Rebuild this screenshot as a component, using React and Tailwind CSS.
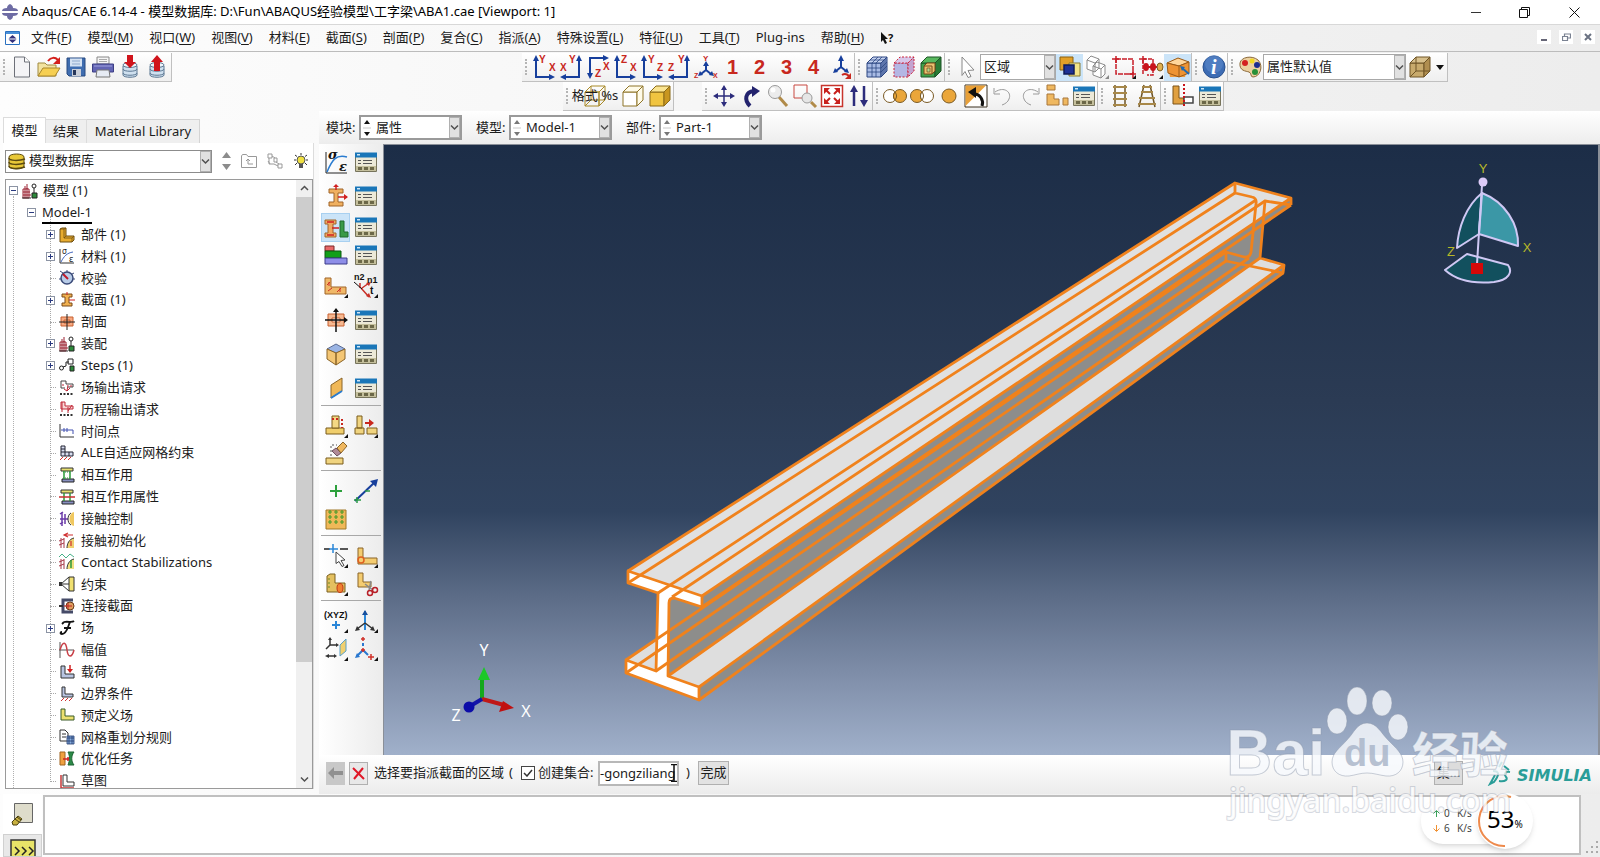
import React, { useState } from "react";

const Ico = ({ children, w = 24, h = 24, box = "0 0 24 24" }) => (
  <svg width={w} height={h} viewBox={box} fill="none" className="shrink-0 overflow-visible" aria-hidden="true">
    {children}
  </svg>
);

const T = ({ x, y, s = 10, c = "#c8281e", children }) => (
  <text x={x} y={y} fontSize={s} fill={c} fontWeight="700" fontFamily="Liberation Sans, sans-serif">{children}</text>
);

/* ---------- file toolbar ---------- */

const NewIcon = () => (
  <Ico><path d="M4.500 2h10l5 5v15h-15z" fill="#f4f4f6" stroke="#6d7078" /><path d="M14.500 2v5h5" fill="#fff" stroke="#6d7078" /></Ico>
);
const OpenIcon = () => (
  <Ico>
    <path d="M1 21V8h7l2 2h9v11z" fill="#f3e3a0" stroke="#a08a40" />
    <path d="M1 21l5-8h17l-5 8z" fill="#f6cf52" stroke="#a8862c" />
    <path d="M11 6c3-4 7-4 10-1" stroke="#d4201c" strokeWidth="2" /><path d="M23 2v7h-7z" fill="#d4201c" />
  </Ico>
);
const SaveIcon = () => (
  <Ico>
    <path d="M3 3h18v18H5l-2-2z" fill="#3f6db0" stroke="#284a80" />
    <path d="M6 3.500h12v8H6z" fill="#d5e2f2" /><path d="M8 6h8M8 9h8" stroke="#8fa9cc" />
    <path d="M8 14h9v7H8z" fill="#c9ced8" /><path d="M9 15h3v5H9z" fill="#27365a" />
  </Ico>
);
const PrintIcon = () => (
  <Ico>
    <path d="M6 9V2h12v7z" fill="#f5f5f5" stroke="#888" /><path d="M8 4.500h8M8 6.500h8" stroke="#aaa" />
    <path d="M1.500 9h21v8h-21z" fill="#6264b4" stroke="#3d3f84" /><path d="M3 11h18" stroke="#9fa1de" />
    <path d="M6 15h12l1 7H5z" fill="#e6ebf4" stroke="#777" />
  </Ico>
);
const DbIcon = ({ up }) => (
  <Ico>
    <path d="M5 11v9c0 3 14 3 14 0v-9z" fill="#cfe0ef" stroke="#5d7893" />
    <path d="M5 14c0 3 14 3 14 0M5 18c0 3 14 3 14 0" stroke="#5d7893" />
    <ellipse cx="12" cy="10" rx="7" ry="2.500" fill="#eef5fb" stroke="#5d7893" />
    {up ? <path d="M12 0l6 7h-3v9H9V7H6z" fill="#d0141c" /> : <path d="M12 13l6-6h-3V0H9v7H6z" fill="#d0141c" />}
  </Ico>
);

/* ---------- view toolbar ---------- */

const Blue = ({ d }) => <path d={d} stroke="#173f9c" strokeWidth="2" />;
const Tip = ({ d }) => <path d={d} fill="#173f9c" />;

const AxisXY = () => <Ico><Blue d="M4 4v18h15" /><Tip d="M4 0l3 6H1zM23 22l-6-3v6z" /><T x="7" y="8">Y</T><T x="17" y="16">X</T></Ico>;
const AxisYX = () => <Ico><Blue d="M20 4v18H5" /><Tip d="M20 0l3 6h-6zM1 22l6-3v6z" /><T x="10" y="8">Y</T><T x="1" y="16">X</T></Ico>;
const AxisXZ = () => <Ico><Blue d="M18 3H4v17" /><Tip d="M23 3l-6-3v6zM4 24l3-6H1z" /><T x="17" y="15">X</T><T x="9" y="22">Z</T></Ico>;
const AxisZX = () => <Ico><Blue d="M4 4v18h15" /><Tip d="M4 0l3 6H1zM23 22l-6-3v6z" /><T x="8" y="8">Z</T><T x="17" y="16">X</T></Ico>;
const AxisYZ = () => <Ico><Blue d="M4 4v18h15" /><Tip d="M4 0l3 6H1zM23 22l-6-3v6z" /><T x="8" y="8">Y</T><T x="17" y="16">Z</T></Ico>;
const AxisZY = () => <Ico><Blue d="M20 4v18H5" /><Tip d="M20 0l3 6h-6zM1 22l6-3v6z" /><T x="11" y="8">Y</T><T x="1" y="16">Z</T></Ico>;
const AxisIso = () => (
  <Ico><Blue d="M12 15V9M12 15l-5 4M12 15l5 4" /><Tip d="M12 6l3 5H9zM4 21l2-5 3 4zM20 21l-2-5-3 4z" /><T x="9" y="6" s="8">Y</T><T x="0" y="23" s="7">Z</T><T x="19" y="23" s="7">X</T></Ico>
);
const ViewNum = ({ n }) => <span className="text-[20px] leading-6 font-bold text-[#c8281e] font-['Liberation_Sans',sans-serif]">{n}</span>;
const AxisRot = () => (
  <Ico><Blue d="M12 12V5M12 12l-5 4M12 12l5 4" /><Tip d="M12 0l3 6H9zM4 18l2-5 3 4zM20 18l-2-5-3 4z" /><path d="M13 20c3-2 5-1 7 1" stroke="#c8281e" strokeWidth="2" /><path d="M22 18v6h-6z" fill="#c8281e" /></Ico>
);
const Cube = ({ fill, side, top, line, children, dash }) => (
  <Ico>
    <path d="M2 8h14v14H2z" fill={fill} stroke={line} strokeDasharray={dash} />
    <path d="M2 8l6-6h14l-6 6z" fill={top} stroke={line} strokeDasharray={dash} />
    <path d="M16 8l6-6v14l-6 6z" fill={side} stroke={line} strokeDasharray={dash} />
    {children}
  </Ico>
);
const MeshCube = () => (
  <Cube fill="#a9bbe4" side="#7f94c8" top="#c6d3f0" line="#2c4682"><path d="M7 8v14M11 8v14M2 13h14M2 17h14M7 8l6-6M11 8l6-6M5 5h14M18 6v14M20 4v14M16 13l6-6M16 17l6-6" stroke="#2c4682" strokeWidth=".8" /></Cube>
);
const DotCube = () => <Cube fill="#b4b6e4" side="#c4a4d0" top="#d8c8ea" line="#cc2038" dash="2 1.500" />;
const GreenCube = () => (
  <Cube fill="#3fa14a" side="#2a7c36" top="#58b85e" line="#1c5426"><path d="M5 11h8v8H5zM5 11l3-3h8v8l-3 3" fill="#e8c070" stroke="#7a4a18" /><path d="M8 13h3v4H8z" fill="#b4d88c" stroke="#7a4a18" strokeWidth=".7" /></Cube>
);
const Corner = () => <path d="M24 20v4h-4z" fill="#111" />;
const CursorIcon = () => <Ico><path d="M7 2l12 13-6 .5 3 6-3 1-3-6-3 4z" fill="#fff" stroke="#888" /></Ico>;
const LayersIcon = () => <Ico><path d="M2 2h13v13H2z" fill="#e2a028" stroke="#8a6010" /><path d="M11 8h11v13H11z" fill="#f2e48a" stroke="#8a7a30" /><path d="M6 10h10v9H6z" fill="#1e3296" stroke="#101c58" strokeWidth="1.500" /></Ico>;
const GhostCubes = () => <Ico><path d="M2 5l4-4 8 3v9l-4 4-8-3zM2 5l8 3v9M10 8l4-4M8 11l4-4 8 3v9l-4 4-8-3zM8 11l8 3v9M16 14l4-4" fill="#fff" stroke="#8b8b8b" /><path d="M24 20v4h-4z" fill="#888" /></Ico>;
const RectSel = () => <Ico><path d="M4 4h17v15H4z" stroke="#c81e28" strokeWidth="1.500" strokeDasharray="5 1" /><path d="M0 4h7M4 1v7M17 19h7M21 16v7" stroke="#c81e28" strokeWidth="1.500" /><Corner /></Ico>;
const CircSel = () => <Ico><path d="M4 19V4h10v16H8" stroke="#c81e28" strokeWidth="1.500" strokeDasharray="4 1" /><path d="M0 4h7M4 1v7" stroke="#c81e28" strokeWidth="1.500" /><ellipse cx="7" cy="12" rx="3" ry="4" fill="#c8141c" /><path d="M9 12h9" stroke="#c8141c" strokeWidth="2" /><ellipse cx="14" cy="12" rx="3" ry="4" fill="#c8141c" /><ellipse cx="21" cy="12" rx="3" ry="4" fill="#e0b050" stroke="#7a5a20" /><Corner /></Ico>;
const OrangeBox = () => <Ico><path d="M1 8l11-5 11 5-4 14H4z" fill="#f09a3c" /><path d="M1 8l11-5 11 4-10 4z" fill="#ffd69a" stroke="#9a5a18" /><path d="M1 8l12 3v11L2 18zM13 11l10-4v11l-10 4" fill="#ee9434" stroke="#9a5a18" /><path d="M16 13l7 6" stroke="#1e6ab4" strokeWidth="2" /><path d="M14 11l5 1-3 4z" fill="#1e6ab4" /></Ico>;
const InfoIcon = () => <Ico><circle cx="12" cy="12" r="11" fill="#3d6cb4" stroke="#28508e" /><circle cx="12" cy="9" r="9" fill="#5c88ca" opacity=".6" /><text x="9" y="19" fontSize="20" fontStyle="italic" fontWeight="700" fill="#fff" fontFamily="Liberation Serif, serif">i</text></Ico>;
const PaletteIcon = () => <Ico><path d="M2 8C3 2 14 0 20 5c6 6 2 17-5 17-3 0-1-4-4-5S1 16 2 8z" fill="#ecd0a0" stroke="#8a6838" /><circle cx="7" cy="8" r="3" fill="#d42020" /><circle cx="14" cy="6" r="2.500" fill="#f2d820" /><circle cx="19" cy="10" r="3" fill="#1c2c90" /><circle cx="17" cy="17" r="3" fill="#289038" /></Ico>;
const TanCube = () => <Cube fill="#c8aa6c" side="#b08e50" top="#d8c08c" line="#6e5426"><path d="M8 2v14h14M8 16l-6 6" stroke="#6e5426" /></Cube>;

/* ---------- second toolbar row ---------- */

const WireCube = () => <Cube fill="none" side="none" top="none" line="#a88a28"><path d="M8 2v14h14M8 16l-6 6" stroke="#a88a28" /></Cube>;
const HiddenCube = () => <Cube fill="#fff" side="#fffbe8" top="#fffbe8" line="#8e7428" />;
const ShadedCube = () => <Cube fill="#f0c440" side="#c89620" top="#fae490" line="#8a6a18" />;
const PanIcon = () => <Ico><path d="M12 3v18M3 12h18" stroke="#2c2c7c" strokeWidth="1.500" /><path d="M12 1l3 5H9zM12 23l3-5H9zM1 12l5-3v6zM23 12l-5-3v6z" fill="#2c2c7c" /></Ico>;
const RotateIcon = () => <Ico><path d="M11 22C5 16 6 8 15 7" stroke="#23236e" strokeWidth="4" /><path d="M21 7l-8-5v11z" fill="#23236e" /></Ico>;
const ZoomIcon = () => <Ico><path d="M13 13l8 9" stroke="#b08a48" strokeWidth="3" /><circle cx="9" cy="8" r="6.500" fill="#ececec" stroke="#9a9a9a" /><circle cx="7" cy="6" r="2.500" fill="#fff" /></Ico>;
const BoxZoomIcon = () => <Ico><path d="M1 1h13v13H1z" stroke="#c84840" /><path d="M18 18l5 5" stroke="#b08a48" strokeWidth="3" /><circle cx="14" cy="14" r="5" fill="#e6e6e6" stroke="#9a9a9a" /></Ico>;
const FitIcon = () => <Ico><path d="M1.500 1.500h21v21h-21z" fill="#fff" stroke="#c8342c" strokeWidth="1.500" /><path d="M6 6l4 4M18 6l-4 4M6 18l4-4M18 18l-4-4" stroke="#c8201c" strokeWidth="2" /><path d="M4 4h6l-6 6zM20 4h-6l6 6zM4 20h6l-6-6zM20 20h-6l6-6z" fill="#c8201c" /></Ico>;
const CycleIcon = () => <Ico><path d="M7 22V5M17 2v17" stroke="#2c2c7c" strokeWidth="2.500" /><path d="M7 1l4 7H3zM17 23l4-7h-8z" fill="#2c2c7c" /></Ico>;
const VennIcon = ({ left }) => (
  <Ico>
    <circle cx="7" cy="12" r="6.500" fill={left ? "#eaa63a" : "#fff"} stroke="#7a5a24" />
    <circle cx="17" cy="12" r="6.500" fill={left ? "#fff" : "#eaa63a"} stroke="#7a5a24" />
    <path d="M12 8a6.500 6.500 0 0 1 0 8 6.500 6.500 0 0 1 0-8z" fill={left ? "#fff" : "#eaa63a"} stroke="#7a5a24" />
  </Ico>
);
const DiscIcon = () => <Ico><circle cx="12" cy="12" r="7" fill="#eaa63a" stroke="#7a5a24" /></Ico>;
const ReplaceIcon = () => <Ico><path d="M1 1h22v22H1z" fill="#fff" stroke="#3a3020" /><path d="M1.500 1.500H22L1.500 22z" fill="#e8a038" /><path d="M18 22c2-6-2-12-8-12" stroke="#111" strokeWidth="3" /><path d="M4 8l8-5v11z" fill="#111" /></Ico>;
const UndoIcon = ({ flip }) => (
  <Ico><g transform={flip ? "translate(24 0) scale(-1 1)" : undefined}><path d="M4 8c9-6 17 0 14 7-1 3-4 5-7 6" stroke="#9a9a9a" /><path d="M3 4v6h6" stroke="#9a9a9a" /></g></Ico>
);
const PartsIcon = () => <Ico><path d="M2 1h8v5H2zM2 10h7v5h5v6H2zM18 14h5v7h-5z" fill="#efb860" stroke="#a8763a" /></Ico>;
const LadderIcon = ({ taper }) => (
  <Ico>
    <path d={taper ? "M9 1L4 23M15 1l5 22" : "M7 1v22M17 1v22"} stroke="#6e5426" strokeWidth="1.500" />
    <path d={taper ? "M7 3h10M6 8h12M4 14h16M3 20h18" : "M5 3h14M5 9h14M5 15h14M5 21h14"} stroke="#a88848" strokeWidth="2" />
  </Ico>
);
const CutIcon = () => <Ico><path d="M2 2h6v12h5v6H2z" fill="#e0a040" stroke="#7a5218" /><path d="M13 13h9v6h-9z" fill="#fff" stroke="#444" strokeWidth="1.500" /><path d="M13 0v24" stroke="#c8141c" strokeWidth="2" strokeDasharray="2 2" /></Ico>;

const ManagerIcon = () => (
  <Ico>
    <path d="M1.500 3.500h21v18h-21z" fill="#ece9d8" stroke="#77745c" />
    <path d="M1 2.500h22v5H1z" fill="#1a76b8" /><path d="M3 4h3v1.500H3z" fill="#cfe6f6" />
    <path d="M4 10.500h3M9 10.500h9M4 13.500h3M9 13.500h9" stroke="#555" />
    <path d="M2 16h20v5H2z" fill="#c4bf9c" /><path d="M4 17h4v3H4zM10 17h4v3h-4zM16 17h4v3h-4z" fill="#6c6848" />
  </Ico>
);

/* ---------- property module toolbox ---------- */

const MaterialIcon = () => <Ico><path d="M2 2v21h21" stroke="#222" /><path d="M3 22C8 10 12 4 23 7" stroke="#2a7cd0" strokeWidth="1.500" /><text x="4" y="9" fontSize="13" fontStyle="italic" fontWeight="700" fill="#111" fontFamily="DejaVu Serif, serif">σ</text><text x="15" y="21" fontSize="13" fontStyle="italic" fontWeight="700" fill="#111" fontFamily="DejaVu Serif, serif">ε</text></Ico>;
const SectionIcon = () => <Ico><path d="M5 5h14v4h-5v9h5v4H5v-4h5V9H5z" fill="#f0b060" stroke="#a06428" /><path d="M12 6V1M14 13h9" stroke="#d02020" strokeWidth="1.500" /><path d="M9 3l3-3 3 3zM20 10l4 3-4 3z" fill="#d02020" /></Ico>;
const AssignIcon = () => <Ico><path d="M1 5h11v4H9v9h3v4H1v-4h3V9H1z" fill="#f0a860" stroke="#a06428" /><path d="M8 13h7M3 7h7M3 20h7" stroke="#d02020" strokeWidth="1.500" /><path d="M16 6h4v11h4v5h-8z" fill="#3a9a48" stroke="#1e6a2c" /></Ico>;
const LayupIcon = () => <Ico><path d="M1 3h9v5H1z" fill="#e86868" stroke="#7a2828" /><path d="M1 8h16v7H1z" fill="#12a018" stroke="#0a5a10" /><path d="M1 15h22v6H1z" fill="#8e8ee8" stroke="#3c3c8a" /></Ico>;
const OrientIcon = () => <Ico><path d="M1 4h6v9h15v7H1z" fill="#f0b868" stroke="#a06428" /><path d="M3 11l3-3M4 17l4-3M13 18l4-4M5 8v4M16 14v4" stroke="#d03028" /><Corner /></Ico>;
const BeamOrientIcon = () => <Ico><path d="M8 14l7-5M7 14l8 9M6 14V9" stroke="#c83028" strokeWidth="1.500" /><path d="M17 8l-5 1 3 3zM17 24l-5-2 3-3z" fill="#c83028" /><path d="M0 8l8 7" stroke="#111" /><T x="0" y="6" s="9" c="#111">n2</T><T x="13" y="9" s="9" c="#111">n1</T><T x="16" y="20" s="10" c="#111">t</T><Corner /></Ico>;
const ProfileIcon = () => <Ico><path d="M4 6h16v12H4zM8 10h8v4H8z" fill="#f6b890" fillRule="evenodd" stroke="#c86030" /><path d="M12 1v23M1 12h21" stroke="#111" strokeWidth="1.500" /><path d="M12 0l3 4H9zM24 12l-4-3v6z" fill="#111" /></Ico>;
const SkinIcon = () => <Ico><path d="M3 7l9-5 9 5-9 4z" fill="#9ab4e4" stroke="#5a6a90" /><path d="M3 7v10l9 6V11zM21 7v10l-9 6V11z" fill="#f4c674" stroke="#8a6428" /></Ico>;
const ShellIcon = () => <Ico><path d="M7 9l11-7v13L7 22z" fill="#f0b858" stroke="#8a6428" /><path d="M7 22l11-7" stroke="#2a7cd0" strokeWidth="2" /></Ico>;
const ExtrudeIcon = () => <Ico><path d="M2 14h18v6H2z" fill="#f0ce6c" stroke="#7a5c1c" /><path d="M8 2h7v12H8z" fill="#f4d884" stroke="#7a5c1c" /><path d="M8 5h7M18 5v9" stroke="#c8281e" strokeWidth="2" strokeDasharray="2 2" /><Corner /></Ico>;
const SplitIcon = () => <Ico><path d="M3 2h5v12H3zM1 14h9v6H1zM13 14h10v6H13z" fill="#f0d480" stroke="#7a5c1c" /><path d="M11 9h6" stroke="#c8281e" strokeWidth="2" /><path d="M15 5l5 4-5 4z" fill="#c8281e" /><Corner /></Ico>;
const EraseIcon = () => <Ico><path d="M2 16h17v6H2z" fill="#f0d480" stroke="#7a5c1c" /><path d="M7 14V3h6" stroke="#555" strokeDasharray="2 2" /><path d="M8 9l4-3 5 5-4 3z" fill="#b08a98" stroke="#6a5060" /><path d="M13 6l6-6 4 4-6 7z" fill="#f0b860" stroke="#8a6428" /></Ico>;
const PointIcon = () => <Ico><path d="M12 6v12M6 12h12" stroke="#2ca03c" strokeWidth="2" /></Ico>;
const DatumAxisIcon = () => <Ico><path d="M1 22L21 3" stroke="#173f9c" strokeWidth="2" /><path d="M24 0l-2 8-6-6z" fill="#173f9c" /><path d="M0 21h7M3 18v6M11 12h5" stroke="#2c9a48" strokeWidth="1.500" /></Ico>;
const PointGridIcon = () => <Ico><path d="M2 3h20v19H2z" fill="#f0b858" stroke="#a07828" /><path d="M4 5h4M10 5h4M16 5h4M4 10h4M10 10h4M16 10h4M4 15h4M10 15h4M16 15h4M6 3v4M12 3v4M18 3v4M6 8v4M12 8v4M18 8v4M6 13v4M12 13v4M18 13v4" stroke="#4c9c2c" strokeWidth="1.200" /></Ico>;
const PickIcon = () => <Ico><path d="M0 5h6M16 5h8" stroke="#222" strokeWidth="1.500" /><path d="M9 0v9M5 5h9" stroke="#2a86d8" strokeWidth="1.500" /><path d="M12 8l9 8-4 .5 3 5-2 1-3-5-3 2z" fill="#fff" stroke="#444" /><Corner /></Ico>;
const PartEditIcon = () => <Ico><path d="M4 4h5v10h14v6H4z" fill="#f4cc70" stroke="#8a6428" /><circle cx="7" cy="16" r="3" stroke="#e06020" strokeWidth="1.500" /><Corner /></Ico>;
const PartCellIcon = () => <Ico><path d="M3 4l3-2h5v9h10v9H3z" fill="#e4c060" stroke="#7a6020" /><ellipse cx="16" cy="16" rx="3" ry="4.500" fill="#f08030" stroke="#c03818" /><path d="M5 6v12" stroke="#6a8a28" strokeDasharray="2 2" /><Corner /></Ico>;
const PartCutIcon = () => <Ico><path d="M4 1h5v9h8v5H4z" fill="#f4cc70" stroke="#8a6428" /><path d="M11 12l8 6M17 9l-2 9" stroke="#888" strokeWidth="1.500" /><circle cx="16" cy="21" r="2.500" stroke="#b82028" strokeWidth="1.500" /><circle cx="21" cy="18" r="2.500" stroke="#b82028" strokeWidth="1.500" /></Ico>;
const XyzIcon = () => <Ico><T x="0" y="9" s="9" c="#111">(XYZ)</T><path d="M12 12v8M8 16h8" stroke="#2a86d8" strokeWidth="2" /><Corner /></Ico>;
const CsysIcon = () => <Ico><path d="M11 21V2" stroke="#2a86d8" strokeWidth="2" /><path d="M11 1l3 5H8z" fill="#174f9c" /><path d="M11 14l-8 6M11 14l8 6" stroke="#333" strokeWidth="1.500" /><path d="M1 22l2-5 3 4zM21 22l-2-5-3 4z" fill="#333" /><Corner /></Ico>;
const PlaneIcon = () => <Ico><path d="M6 8V2M6 8h6M6 8l-4 4M3 19h8" stroke="#333" strokeWidth="1.500" /><path d="M4 3l2-3 2 3zM12 6l3 2-3 2zM1 19l4-2v4zM13 19l-3-2v4z" fill="#333" /><path d="M16 8l6-6v12l-6 5z" fill="#f0d070" stroke="#5aa0c8" /><Corner /></Ico>;
const CsysPtIcon = () => <Ico><path d="M9 13l-6 6M9 13l5 5M9 6v3" stroke="#2a78d0" strokeWidth="2" /><path d="M9 0v4M7 2h4M9 11v4M7 13h4M17 17v6M14 20h6" stroke="#d03028" strokeWidth="1.500" /><path d="M1 21l2-5 3 4z" fill="#2a78d0" /><Corner /></Ico>;

/* ---------- model tree ---------- */

const Small = ({ children }) => <Ico w={16} h={16} box="0 0 16 16">{children}</Ico>;

const treeIcons = {
  model: <Small><path d="M5 1v5M1 6h6v9H1zM1 9h7M1 12h8M3 3v12M5 5v10" stroke="#9a2030" /><path d="M0 15h9" stroke="#333" /><circle cx="12" cy="3" r="2" stroke="#222" /><path d="M12 5v5M10 10h5v5h-5z" fill="#2c8a3a" stroke="#222" /></Small>,
  part: <Small><path d="M1 2l2-1h4v8h8v4l-2 2H1z" fill="#e8ac30" stroke="#6e4e10" /><path d="M1 2h4v9h8v4M5 2l2-1M5 11l2-2M13 11l2-2" stroke="#6e4e10" strokeWidth=".8" /></Small>,
  material: <Small><path d="M1 1v14h14" stroke="#333" /><path d="M2 14C5 8 8 5 14 4" stroke="#4468c0" /><text x="3" y="6" fontSize="8" fill="#222">σ</text><text x="10" y="14" fontSize="9" fill="#222">ε</text></Small>,
  calib: <Small><circle cx="8" cy="8" r="6" fill="#b8cce8" stroke="#3a4a78" strokeWidth="1.500" /><path d="M4 4l5 5" stroke="#c01828" strokeWidth="2" /><path d="M1 1l3 2M15 3l-2 1M8 0v2M0 9h2M14 9h2" stroke="#3a4a78" /></Small>,
  section: <Small><path d="M3 2h10v3h-3v6h3v3H3v-3h3V5H3z" fill="#f0b050" stroke="#7a4a18" /><path d="M8 0v3M10 8h6" stroke="#d02020" /></Small>,
  profile: <Small><path d="M2 3h12v9H2z" fill="#f6a880" stroke="#c86030" /><path d="M5 6h6v3H5z" stroke="#c86030" /><path d="M8 0v16M0 8h16" stroke="#222" /></Small>,
  steps: <Small><circle cx="2.500" cy="10" r="2" stroke="#222" /><path d="M4 9l3-1V4h3M9 1h5v5H9z" stroke="#222" /><path d="M11 8h4v5h-4z" fill="#2c8a3a" stroke="#222" /></Small>,
  field: <Small><path d="M2 1h5v3h7v3H9M2 1v7h4" stroke="#444" /><path d="M4 4v2M9 5l-1 6M5 9l3 2 3-3M12 5v2" stroke="#c02838" /><path d="M1 14h14" stroke="#333" strokeWidth="2" strokeDasharray="2 1.500" /></Small>,
  history: <Small><path d="M2 1h4v4h8v3H2z" fill="#f8d8d8" stroke="#c02838" /><path d="M3 1v10M9 6v6M13 4l-4 6" stroke="#c02838" /><path d="M1 14h14" stroke="#333" strokeWidth="2" strokeDasharray="2 1.500" /></Small>,
  time: <Small><path d="M1 1v13h14" stroke="#333" /><path d="M2 7h12M5 5v4M8 5v4M14 7v4" stroke="#4050b0" /></Small>,
  ale: <Small><path d="M2 1h4v6h8v4H2zM2 4h4M2 7h4v4M10 7v4" fill="#d8def0" stroke="#223" /><path d="M1 15l3-3M5 15l3-3M9 15l3-3" stroke="#d03030" /></Small>,
  inter: <Small><path d="M2 1h12v3H2z" fill="#e8e070" stroke="#333" /><path d="M3 12h12v3H3z" fill="#8890c0" stroke="#222" /><path d="M5 4v8M11 4v8" stroke="#2c9a3a" strokeWidth="1.500" /><path d="M4 5h8M4 11h8" stroke="#2c9a3a" strokeDasharray="1 1" /></Small>,
  interProp: <Small><path d="M2 1h12v3H2z" fill="#e8e070" stroke="#333" /><path d="M3 12h12v3H3z" fill="#8890c0" stroke="#222" /><path d="M5 4v8M11 4v8" stroke="#2c9a3a" strokeWidth="1.500" /><path d="M0 8h16" stroke="#c83030" strokeWidth="1.500" /></Small>,
  contact: <Small><path d="M3 1v14M1 3l3-2M1 8h8M1 13l3-2M6 3v10" stroke="#6a3aa8" strokeWidth="1.500" /><path d="M15 1c-6 1-6 13 0 14z" fill="#f0c860" /><path d="M12 2c-4 2-4 10 0 12" stroke="#333" /></Small>,
  contactInit: <Small><path d="M2 5v10M5 5v10M0 8l5-2M0 12l5-2" stroke="#a83848" /><path d="M15 5c-5 1-7 6-7 10h7z" fill="#f0d070" /><path d="M15 5c-5 1-7 6-7 10" stroke="#333" /><path d="M14 2H6M9 0L5 2l4 2M12 8v5" stroke="#d03030" strokeWidth="1.200" /></Small>,
  stab: <Small><path d="M0 3l3-3 4 4 4-4 4 3" stroke="#48b088" /><path d="M2 5v10M5 5v10M0 8l5-2M0 12l5-2" stroke="#a83848" /><path d="M15 5c-5 1-7 6-7 10h7z" fill="#f0e080" /><path d="M15 5c-5 1-7 6-7 10" stroke="#333" /><path d="M12 6v8" stroke="#2c9a3a" strokeWidth="1.500" /></Small>,
  constraint: <Small><path d="M10 1h5v14h-5z" fill="#f0e070" stroke="#333" /><path d="M10 1L2 8l8 7M3 8h7" stroke="#333" /><path d="M0 6h3v4H0z" fill="#333" /></Small>,
  connector: <Small><path d="M14 2H4v12h10" stroke="#454b68" strokeWidth="3" /><path d="M0 8h4" stroke="#333" strokeWidth="2" /><circle cx="11" cy="8" r="4" fill="#e0a060" stroke="#6a3a18" /><path d="M5 8h8M9 5v6" stroke="#c02020" /></Small>,
  fields: <Small><path d="M5 2c4-1 8 1 10-1M11 2C9 6 8 14 3 14c-2 0-2-2 0-2M5 8h7M5 2L3 4" stroke="#111" strokeWidth="1.800" /></Small>,
  amp: <Small><path d="M1 0v16M0 8h15" stroke="#555" /><path d="M1 8C4-2 7 0 8 8s5 8 7 0" stroke="#c84048" strokeWidth="1.500" /></Small>,
  load: <Small><path d="M2 2h4v8h9v4H2z" fill="#b8c4e0" stroke="#333" /><path d="M11 1v6" stroke="#d02020" strokeWidth="1.500" /><path d="M8 5h6l-3 4z" fill="#d02020" /></Small>,
  bc: <Small><path d="M3 1h3v7h8v3H3z" fill="#b8c4e0" stroke="#333" /><path d="M2 15l3-3M6 15l3-3M10 15l3-3" stroke="#d03030" /></Small>,
  predef: <Small><path d="M2 2h4v7h9v4H2z" fill="#ece070" stroke="#3a5a28" /></Small>,
  remesh: <Small><path d="M1 1h5l3 3v8H1z" fill="#fff" stroke="#333" /><path d="M3 5h4M3 8h4" stroke="#333" /><path d="M8 7h7v8H8zM8 9h7M8 12h7M10 7v8M13 7v8" fill="#8ab0e0" stroke="#223a70" strokeWidth=".8" /></Small>,
  optim: <Small><path d="M1 1h5v13H1z" fill="#f0a040" stroke="#a06420" /><path d="M9 1h6c-3 4-3 9 0 13H9c2-5 2-9 0-13z" fill="#2c8a48" stroke="#1e6434" /><path d="M4 8h6M9 6v4" stroke="#d02020" strokeWidth="1.500" /></Small>,
  sketch: <Small><path d="M4 2h4v7h7v4H4z" stroke="#333" /><path d="M2 2v13h13" stroke="#c83838" strokeWidth="1.500" /></Small>,
};

const treeItems = [
  ["部件 (1)", "part", true], ["材料 (1)", "material", true], ["校验", "calib"], ["截面 (1)", "section", true],
  ["剖面", "profile"], ["装配", "model", true], ["Steps (1)", "steps", true], ["场输出请求", "field"],
  ["历程输出请求", "history"], ["时间点", "time"], ["ALE自适应网格约束", "ale"], ["相互作用", "inter"],
  ["相互作用属性", "interProp"], ["接触控制", "contact"], ["接触初始化", "contactInit"], ["Contact Stabilizations", "stab"],
  ["约束", "constraint"], ["连接截面", "connector"], ["场", "fields", true], ["幅值", "amp"], ["载荷", "load"],
  ["边界条件", "bc"], ["预定义场", "predef"], ["网格重划分规则", "remesh"], ["优化任务", "optim"], ["草图", "sketch"],
];

const Chevron = ({ up }) => (
  <svg width="9" height="7" viewBox="0 0 9 7" fill="none"><path d={up ? "M1 5l3.500-3.500L8 5" : "M1 1.500L4.500 5 8 1.500"} stroke="#505050" strokeWidth="1.500" /></svg>
);

const Expander = ({ open }) => (
  <button aria-label={open ? "collapse" : "expand"} className="relative shrink-0 w-[9px] h-[9px] border border-[#8c94a4] bg-white">
    <svg viewBox="0 0 7 7" className="block w-full h-full"><path d={open ? "M1 3.500h5" : "M1 3.500h5M3.500 1v5"} stroke="#2a3a80" /></svg>
  </button>
);

function ModelTree() {
  return (
    <div className="flex flex-1 min-h-0 border border-[#9a9a9a] bg-white">
      <div className="relative flex-1 overflow-hidden">
        <span className="absolute left-[7px] top-4 bottom-0 border-l border-dotted border-[#b0b0b0]" />
        <span className="absolute left-[44px] top-9 bottom-2 border-l border-dotted border-[#a8a8a8]" />
        <ul className="relative grid auto-rows-fr h-[612px] text-[13px]">
          <li className="flex items-center pl-[3px]">
            <Expander open />
            <span className="ml-1 flex">{treeIcons.model}</span>
            <span className="ml-[5px]">模型 (1)</span>
          </li>
          <li className="flex items-center pl-[21px]">
            <Expander open />
            <span className="ml-[6px] leading-5 border-b-2 border-black">Model-1</span>
          </li>
          {treeItems.map(([label, icon, open]) => (
            <li key={label} className="flex items-center pl-[40px]">
              {open ? <Expander /> : <span className="w-[9px] pl-1"><span className="block w-[6px] border-t border-dotted border-[#a8a8a8]" /></span>}
              <span className="ml-1 flex">{treeIcons[icon]}</span>
              <span className="ml-[6px] whitespace-nowrap">{label}</span>
            </li>
          ))}
        </ul>
      </div>
      <div className="w-4 flex flex-col bg-[#f0f0f0]">
        <button aria-label="scroll up" className="h-[17px] flex items-center justify-center"><Chevron up /></button>
        <div className="flex-1 flex flex-col">
          <span className="h-[81%] bg-[#cdcdcd]" />
        </div>
        <button aria-label="scroll down" className="h-[17px] flex items-center justify-center"><Chevron /></button>
      </div>
    </div>
  );
}

/* ---------- controls ---------- */

const Spin = ({ dim }) => (
  <svg width="8" height="20" viewBox="0 0 8 20" className="shrink-0 mx-[2px]"><path d="M1 6l3-4 3 4zM1 14h6l-3 4z" fill={dim ? "#777" : "#111"} /><path d="M0 10h8" stroke="#c8c8c8" /></svg>
);

function Combo({ label, value, className, spin, dim, icon }) {
  return (
    <span className={"relative flex items-center border bg-white " + className}>
      {spin && <Spin dim={dim} />}
      {icon}
      <select aria-label={label} defaultValue={value} className="appearance-none flex-1 min-w-0 h-full pl-[3px] bg-transparent text-[13px] outline-none">
        <option>{value}</option>
      </select>
      <span className="pointer-events-none absolute right-0 inset-y-0 w-[11px] flex items-center justify-center border border-[#b0b0b0] bg-[#e1e1e1]"><Chevron /></span>
    </span>
  );
}

const Grip = () => (
  <span className="w-2 flex justify-center"><span className="h-4 border-l-2 border-dotted border-[#b4b4b4]" /></span>
);

const Group = ({ children, className = "" }) => (
  <div className={"flex items-center border-r border-b border-[#c0c0c0] bg-linear-to-b from-white to-[#efefef] " + className}>
    <Grip />
    {children}
  </div>
);

const Tool = ({ label, active, children }) => (
  <button aria-label={label} className={"w-[27px] h-[27px] flex items-center justify-center " + (active ? "bg-[#cbe4f8]" : "")}>{children}</button>
);

const menus = [
  ["文件", "F"], ["模型", "M"], ["视口", "W"], ["视图", "V"], ["材料", "E"], ["截面", "S"], ["剖面", "P"], ["复合", "C"],
  ["指派", "A"], ["特殊设置", "L"], ["特征", "U"], ["工具", "T"], ["Plug-ins"], ["帮助", "H"],
];

const AppMark = () => (
  <Ico w={16} h={16} box="0 0 16 16"><path d="M8 0c2 1 3 2 3 4 3 0 5 1 5 3H0c0-2 2-3 5-3 0-2 1-3 3-4zM0 9h16c0 2-2 3-5 3 0 2-1 3-3 4-2-1-3-2-3-4-3 0-5-1-5-3z" fill="#6e6ca4" /></Ico>
);

function TitleBar() {
  return (
    <header className="h-6 flex items-center bg-white pl-[2px] shrink-0">
      <AppMark />
      <h1 className="ml-[4px] flex-1 text-[13px] text-black whitespace-nowrap">Abaqus/CAE 6.14-4 - 模型数据库: D:\Fun\ABAQUS经验模型\工字梁\ABA1.cae [Viewport: 1]</h1>
      <button aria-label="minimize" className="w-12 h-6 flex items-center justify-center"><span className="w-[10px] border-t border-[#333]" /></button>
      <button aria-label="restore" className="w-12 h-6 flex items-center justify-center">
        <svg width="11" height="11" viewBox="0 0 11 11" fill="none"><path d="M.5 2.500h8v8h-8zM2.500 2.500v-2h8v8h-2" stroke="#111" /></svg>
      </button>
      <button aria-label="close" className="w-[52px] h-6 flex items-center justify-center">
        <svg width="11" height="11" viewBox="0 0 11 11"><path d="M.5.5l10 10M10.500.5l-10 10" stroke="#111" /></svg>
      </button>
    </header>
  );
}

function MenuBar() {
  return (
    <nav className="h-7 flex items-center border-t border-b border-[#d8d8d8] border-b-[#bcbcbc] pl-[5px] pr-[5px] shrink-0">
      <svg width="15" height="14" viewBox="0 0 15 14"><path d="M.5.500h14v13H.5z" fill="#fff" stroke="#2a70c0" /><path d="M1 1h13v2H1z" fill="#4a90d8" /><path d="M7.500 4l4 3.500h-8zM3.500 8.500h8l-4 3.500z" fill="#33307c" /></svg>
      <div className="flex flex-1 gap-4 ml-[11px] text-[13px]">
        {menus.map(([name, key]) => (
          <button key={name} className="whitespace-nowrap">{name}{key && <>(<u className="underline-offset-2">{key}</u>)</>}</button>
        ))}
        <button aria-label="context help" className="flex items-center">
          <svg width="16" height="14" viewBox="0 0 16 14"><path d="M1 1v10l2-2 2 4 2-1-2-4h3z" fill="#111" /><text x="8" y="11" fontSize="11" fontWeight="700" fill="#111">?</text></svg>
        </button>
      </div>
      <div className="flex gap-2 pb-[2px]">
        <button aria-label="minimize viewport" className="w-[14px] h-[14px] bg-white flex items-end justify-center pb-[3px]"><span className="w-[6px] border-t-2 border-[#667]" /></button>
        <button aria-label="restore viewport" className="w-[14px] h-[14px] bg-white flex items-center justify-center"><svg width="9" height="9" viewBox="0 0 9 9" fill="none"><path d="M.5 3.500h5v4h-5zM2.500 3V1h6v4H6" stroke="#7a8292" strokeWidth="1.200" /></svg></button>
        <button aria-label="close viewport" className="w-[14px] h-[14px] bg-white flex items-center justify-center"><svg width="8" height="8" viewBox="0 0 8 8"><path d="M1 1l6 6M7 1L1 7" stroke="#6a7282" strokeWidth="2" /></svg></button>
      </div>
    </nav>
  );
}

function Toolbars() {
  return (
    <div className="shrink-0 pt-px">
      <div className="flex h-[29px]">
        <Group className="w-[172px]">
          <Tool label="new"><NewIcon /></Tool><Tool label="open"><OpenIcon /></Tool><Tool label="save"><SaveIcon /></Tool>
          <Tool label="print"><PrintIcon /></Tool><Tool label="import"><DbIcon /></Tool><Tool label="export"><DbIcon up /></Tool>
        </Group>
        <Group className="ml-[350px]">
          <Tool label="xy"><AxisXY /></Tool><Tool label="yx"><AxisYX /></Tool><Tool label="xz"><AxisXZ /></Tool>
          <Tool label="zx"><AxisZX /></Tool><Tool label="yz"><AxisYZ /></Tool><Tool label="zy"><AxisZY /></Tool><Tool label="iso"><AxisIso /></Tool>
          {[1, 2, 3, 4].map((n) => <Tool key={n} label={"view " + n}><ViewNum n={n} /></Tool>)}
          <Tool label="rotate axes"><AxisRot /></Tool>
        </Group>
        <Group>
          <Tool label="mesh"><MeshCube /></Tool><Tool label="seeds"><DotCube /></Tool><Tool label="geometry"><GreenCube /></Tool>
        </Group>
        <Group>
          <Tool label="select"><CursorIcon /></Tool>
          <Combo label="选择" value="区域" className="w-[76px] h-[26px] border-[#a8a8a8]" />
          <Tool label="layers" active><LayersIcon /></Tool><Tool label="hidden"><GhostCubes /></Tool><Tool label="rectangle"><RectSel /></Tool>
          <Tool label="circle"><CircSel /></Tool><Tool label="box" active><OrangeBox /></Tool>
        </Group>
        <Group><Tool label="info"><InfoIcon /></Tool></Group>
        <Group>
          <Tool label="palette"><PaletteIcon /></Tool>
          <Combo label="颜色" value="属性默认值" className="w-[143px] h-[26px] border-[#a8a8a8]" />
          <Tool label="render"><TanCube /></Tool>
          <button aria-label="more" className="w-[14px] flex justify-center"><svg width="8" height="5" viewBox="0 0 8 5"><path d="M0 0h8L4 5z" fill="#111" /></svg></button>
        </Group>
      </div>
      <div className="flex h-[29px]">
        <Group className="ml-[563px]">
          <button className="relative w-[48px] h-[27px] flex items-center justify-center text-[13px] whitespace-nowrap">
            <WireCube />
            <span className="absolute inset-0 flex items-center justify-center">格式 %s</span>
          </button>
          <Tool label="hidden line"><HiddenCube /></Tool><Tool label="shaded"><ShadedCube /></Tool>
        </Group>
        <Group className="ml-7">
          <Tool label="pan"><PanIcon /></Tool><Tool label="rotate"><RotateIcon /></Tool><Tool label="zoom"><ZoomIcon /></Tool>
          <Tool label="box zoom"><BoxZoomIcon /></Tool><Tool label="fit"><FitIcon /></Tool><Tool label="cycle"><CycleIcon /></Tool>
        </Group>
        <Group>
          <Tool label="and"><VennIcon /></Tool><Tool label="minus"><VennIcon left /></Tool><Tool label="either"><DiscIcon /></Tool>
          <Tool label="replace"><ReplaceIcon /></Tool><Tool label="undo"><UndoIcon /></Tool><Tool label="redo"><UndoIcon flip /></Tool>
          <Tool label="parts"><PartsIcon /></Tool><Tool label="group manager"><ManagerIcon /></Tool>
        </Group>
        <Group><Tool label="ladder"><LadderIcon /></Tool><Tool label="perspective"><LadderIcon taper /></Tool></Group>
        <Group><Tool label="cut"><CutIcon /></Tool><Tool label="cut manager"><ManagerIcon /></Tool></Group>
      </div>
    </div>
  );
}

function Sidebar() {
  return (
    <aside className="w-[319px] shrink-0 flex flex-col pl-[3px] pr-[5px] pt-[6px] pb-[5px]">
      <div className="flex items-end h-[26px] text-[13px]">
        <button className="w-[43px] h-[26px] bg-white border border-b-0 border-[#dcdcdc]">模型</button>
        <button className="w-[41px] h-6 bg-[#efefef] border-t border-r border-[#dcdcdc]">结果</button>
        <button className="w-[113px] h-6 bg-[#efefef] border-t border-r border-[#d4d4d4]">Material Library</button>
      </div>
      <div className="flex-1 min-h-0 flex flex-col bg-white border-r border-[#dcdcdc] pl-[2px]">
        <div className="flex items-center h-9 shrink-0 gap-[10px]">
          <Combo label="模型数据库" value="模型数据库" className="w-[207px] h-[23px] border-[#8c8c8c]" icon={
            <svg width="18" height="17" viewBox="0 0 18 17" className="ml-[2px]"><path d="M1 4c0-4 15-4 15 0v9c0 4-15 4-15 0z" fill="#e8c838" stroke="#5a4a10" /><path d="M1 5c0 3 10 3 16 1M1 9c0 3 10 3 16 1M1 13c0 3 10 3 16 1" stroke="#5a4a10" strokeWidth="1.500" fill="none" /></svg>
          } />
          <svg width="9" height="18" viewBox="0 0 9 18"><path d="M0 6l4.500-6L9 6zM0 12h9l-4.500 6z" fill="#8c8c8c" /></svg>
          <button aria-label="up"><svg width="16" height="14" viewBox="0 0 16 14" fill="none"><path d="M.5 13.500V2l1-1.500h4L7 2.500h8.500v11zM5 7l2-2 2 2M7 5v5h5" stroke="#999" /></svg></button>
          <button aria-label="filter"><svg width="16" height="16" viewBox="0 0 16 16" fill="none"><path d="M1 1h4v4H1zM7 5h3v4H7zM11 11h4v4h-4zM2 5v6h5M5 3l3 2M7 11l4 2M1 8l2 3M9 9l3 2" stroke="#999" /></svg></button>
          <button aria-label="tips"><svg width="16" height="17" viewBox="0 0 16 17" fill="none"><circle cx="8" cy="7" r="4" fill="#f0e040" stroke="#555" /><path d="M6 11h4v4H6z" fill="#555" /><path d="M8 0v2M1 7h2M13 7h2M2 2l2 1.500M14 2l-2 1.500M2 12l2-2M14 12l-2-2" stroke="#333" /></svg></button>
        </div>
        <ModelTree />
      </div>
    </aside>
  );
}

const ToolRow = ({ left, right, active, short }) => (
  <div className={"flex gap-[3px] items-center " + (short ? "h-7" : "h-[34px]")}>
    <button aria-label="tool" className={"w-[27px] h-[27px] flex items-center justify-center " + (active ? "bg-[#cbe4f8] ring-1 ring-[#a8d0f0]" : "")}>{left}</button>
    {right && <button aria-label="manager" className="w-[27px] h-[27px] flex items-center justify-center">{right}</button>}
  </div>
);

const ToolBlock = ({ children, last }) => (
  <div className={"pt-[6px] pb-[2px] pl-px border-[#a8a8a8] " + (last ? "" : "border-b")}>{children}</div>
);

function Toolbox() {
  return (
    <div className="w-16 shrink-0 pl-[2px] pr-[2px] bg-linear-to-r from-white to-[#ececec]">
      <div className="pl-px pt-px border-b border-[#a8a8a8]">
        <ToolRow left={<MaterialIcon />} right={<ManagerIcon />} />
        <ToolRow left={<SectionIcon />} right={<ManagerIcon />} />
        <ToolRow short active left={<AssignIcon />} right={<ManagerIcon />} />
        <ToolRow short left={<LayupIcon />} right={<ManagerIcon />} />
        <ToolRow left={<OrientIcon />} right={<BeamOrientIcon />} />
        <ToolRow left={<ProfileIcon />} right={<ManagerIcon />} />
        <ToolRow left={<SkinIcon />} right={<ManagerIcon />} />
        <ToolRow left={<ShellIcon />} right={<ManagerIcon />} />
      </div>
      <ToolBlock>
        <ToolRow short left={<ExtrudeIcon />} right={<SplitIcon />} />
        <ToolRow short left={<EraseIcon />} />
      </ToolBlock>
      <ToolBlock>
        <ToolRow short left={<PointIcon />} right={<DatumAxisIcon />} />
        <ToolRow short left={<PointGridIcon />} />
      </ToolBlock>
      <ToolBlock>
        <ToolRow short left={<PickIcon />} right={<PartEditIcon />} />
        <ToolRow short left={<PartCellIcon />} right={<PartCutIcon />} />
      </ToolBlock>
      <ToolBlock last>
        <ToolRow short left={<XyzIcon />} right={<CsysIcon />} />
        <ToolRow short left={<PlaneIcon />} right={<CsysPtIcon />} />
      </ToolBlock>
    </div>
  );
}

function Viewport() {
  return (
    <div className="flex-1 min-w-0 border-t border-l border-r-2 border-[#8a8f98] bg-[linear-gradient(to_bottom,#1c2d47_0%,#2b3b54_42%,#30435f_60%,#5c6c87_74%,#8291ac_88%,#a0b0ca_100%)]">
      <svg viewBox="384 145 1214 610" className="block w-full h-full" fill="none">
        <g strokeLinejoin="round">
          <path d="M626 660L656 641V672z" fill="#dedede" />
          <path d="M669 598L702 596L1291 198V205L1263 225L1260 258L669 676z" fill="#8d8d8b" />
          <path d="M628 571L1235 183L1291 198L702 596z" fill="#e0e0e0" />
          <path d="M669 676L1260 258L1284 265L699 687z" fill="#dedede" />
          <path d="M699 687L1284 265L1283 273L699 700z" fill="#8d8d8b" />
          <path d="M628 571L702 596V607L674 598Q669 598 669 603L668 676L699 687V700L626 673V660L656 671L658 593L628 583z" fill="#fff" />
          <g stroke="#f0821c" strokeWidth="2.800">
            <path d="M628 571L702 596V607L674 598Q669 598 669 603L668 676L699 687V700L626 673V660L656 671L658 593L628 583z" />
            <path d="M628 571L1235 183L1291 198V205M702 596L1291 198M702 607L1291 205M628 583L1235 193M658 593L1256 200M672 597L1265 201" />
            <path d="M1235 183V193L1252 197Q1257 198 1256 204L1251 252Q1250 258 1244 257L1226 252V261L1283 273L1284 265L1260 258L1265 201L1291 205" />
            <path d="M626 660L1226 252M626 673L1226 261M656 671L1249 258M668 676L1260 258M699 687L1284 265M699 700L1283 273" />
          </g>
        </g>
        <g stroke="#cfc8f4" strokeWidth="2" strokeLinejoin="round">
          <path d="M1482 193C1466 206 1458 228 1457 248L1479 234z" fill="#12505e" />
          <path d="M1482 193C1505 202 1519 224 1518 246L1479 234z" fill="#3b97a6" />
          <path d="M1467 254L1508 265C1513 272 1509 280 1494 282C1474 284 1456 280 1445 270z" fill="#12505e" />
          <path d="M1482 185L1477 264" />
        </g>
        <circle cx="1483" cy="182" r="4.500" fill="#dccbf8" />
        <path d="M1471 263h12v11h-12z" fill="#d40808" />
        <g fontFamily="Liberation Sans, sans-serif" fontSize="13" fill="#b8b828" textAnchor="middle">
          <text x="1483" y="173">Y</text><text x="1451" y="256">Z</text><text x="1527" y="252">X</text>
        </g>
        <path d="M482 699V678" stroke="#14a81c" strokeWidth="4" /><path d="M484 667l6 13h-12z" fill="#1cc828" />
        <path d="M482 699l22 6" stroke="#c01818" strokeWidth="4" /><path d="M514 708l-15 4 4-11z" fill="#c01010" />
        <path d="M482 699l-10 6" stroke="#1414a8" strokeWidth="4" /><circle cx="469" cy="707" r="5.500" fill="#0c0ca8" />
        <g fontFamily="Noto Sans, sans-serif" fontSize="16" fill="#fff" textAnchor="middle">
          <text x="484" y="656">Y</text><text x="456" y="721">Z</text><text x="526" y="717">X</text>
        </g>
      </svg>
    </div>
  );
}

function ContextBar() {
  return (
    <div className="h-[33px] shrink-0 flex items-center pl-[7px] text-[13px] bg-linear-to-b from-white to-[#ededed]">
      <span className="w-[33px] whitespace-nowrap">模块:</span>
      <Combo label="模块" value="属性" spin className="w-[103px] h-[25px] border-2 border-[#9a9a9a]" />
      <span className="w-[33px] ml-[14px] whitespace-nowrap">模型:</span>
      <Combo label="模型" value="Model-1" spin dim className="w-[103px] h-[25px] border-2 border-[#9a9a9a]" />
      <span className="w-[33px] ml-[14px] whitespace-nowrap">部件:</span>
      <Combo label="部件" value="Part-1" spin dim className="w-[103px] h-[25px] border-2 border-[#9a9a9a]" />
    </div>
  );
}

function PromptBar() {
  const [name, setName] = useState("-gongziliang");
  return (
    <div className="h-[39px] shrink-0 flex items-center pl-[7px] pb-[3px] text-[13px] bg-linear-to-b from-white to-[#ececec]">
      <button aria-label="back" className="w-[19px] h-[23px] bg-[#c8c8c8] flex items-center justify-center">
        <svg width="15" height="12" viewBox="0 0 15 12"><path d="M0 6l6-6v4h9v4H6v4z" fill="#909090" /></svg>
      </button>
      <button aria-label="cancel" className="ml-1 w-[19px] h-[23px] border border-[#b0b0b0] bg-[#e8e8e8] flex items-center justify-center">
        <svg width="13" height="13" viewBox="0 0 13 13"><path d="M1 1l11 11M11 1L2 12" stroke="#e01828" strokeWidth="2" /></svg>
      </button>
      <span className="ml-[6px] w-[135px] whitespace-nowrap">选择要指派截面的区域</span>
      <span className="w-3">(</span>
      <input id="mkset" type="checkbox" defaultChecked className="appearance-none w-[14px] h-[14px] border border-[#444] bg-white" />
      <svg width="10" height="8" viewBox="0 0 10 8" fill="none" className="pointer-events-none -ml-3 mr-[2px]"><path d="M1 4l3 3 5-6" stroke="#333" strokeWidth="1.500" /></svg>
      <label htmlFor="mkset" className="ml-[3px] w-[60px] whitespace-nowrap">创建集合:</label>
      <input aria-label="集合名称" value={name} onChange={(e) => setName(e.target.value)} className="w-[81px] h-[25px] border-2 border-[#b8b8b8] bg-white text-[13px] outline-none" />
      <svg width="6" height="18" viewBox="0 0 6 18" fill="none" className="-ml-2 mr-[2px] z-10"><path d="M0 .5h6M0 17.500h6M3 0v18" stroke="#111" strokeWidth="1.500" /></svg>
      <span className="ml-[7px] w-3">)</span>
      <button className="w-[31px] h-6 border border-[#b0b0b0] bg-[#e2e2e2] whitespace-nowrap">完成</button>
      <span className="flex-1" />
      <button className="w-[29px] h-6 border border-[#b0b0b0] bg-[#dcdcdc] whitespace-nowrap">集...</button>
      <svg width="113" height="26" viewBox="0 0 113 26" fill="none" className="ml-6">
        <g stroke="#2a9d98" strokeWidth="2"><path d="M6 11c6 0 7 3 1 11l-4 2 5-9" /><path d="M23 12c-6-1-6 3-4 5s0 5-7 4" /><path d="M12 7l3-5M17 6l5 4" /></g>
        <text x="30" y="21" fontSize="16" fontStyle="italic" fontWeight="700" fill="#2a9d98" fontFamily="DejaVu Sans, sans-serif">SIMULIA</text>
      </svg>
    </div>
  );
}

function MessageArea() {
  return (
    <footer className="h-[63px] shrink-0 flex pl-[3px]">
      <div className="w-[39px] flex flex-col">
        <button aria-label="messages" className="h-10 shrink-0 bg-white flex items-center justify-center">
          <svg width="24" height="24" viewBox="0 0 24 24" fill="none"><path d="M3.500 1.500h18v19h-18z" fill="#dedccb" stroke="#666" /><path d="M1 20l6-6 4 3-5 6H2z" fill="#c8b040" stroke="#4a4010" /><path d="M4 17l4 3M6 15l4 3" stroke="#4a4010" /></svg>
        </button>
        <button aria-label="command line" className="flex-1 bg-[#e8e8e8] border border-[#d0d0d0] flex items-start justify-center overflow-hidden pt-1">
          <svg width="26" height="24" viewBox="0 0 26 24" fill="none" className="shrink-0"><path d="M1 1h24v24H1z" fill="#e8e468" stroke="#333" strokeWidth="1.500" /><path d="M5 8l4 4-4 4M12 8l4 4-4 4M19 8l4 4-4 4" stroke="#222" strokeWidth="1.500" /></svg>
        </button>
      </div>
      <textarea aria-label="output" className="flex-1 mt-[1px] mb-[2px] ml-[1px] bg-white border-2 border-[#c0c0c0] resize-none outline-none" />
      <svg width="19" height="63" viewBox="0 0 19 63"><path d="M15 47h2v2h-2zM10 52h2v2h-2zM15 52h2v2h-2zM5 57h2v2H5zM10 57h2v2h-2zM15 57h2v2h-2z" fill="#aaa" /></svg>
    </footer>
  );
}

const Rate = ({ value, down }) => (
  <div className="flex items-center h-[15px]">
    <svg width="7" height="7" viewBox="0 0 7 7" fill="none" className="mr-1"><path d={down ? "M3.500 0v6M.5 3.500l3 3 3-3" : "M3.500 7V1M.5 3.500l3-3 3 3"} stroke={down ? "#f09030" : "#38a058"} /></svg>
    <span className="w-[13px]">{value}</span><span>K/s</span>
  </div>
);

function SpeedBall() {
  return (
    <div className="absolute right-[67px] bottom-[8px] flex items-center">
      <div className="w-[88px] h-[46px] -mr-8 rounded-l-[22px] bg-white shadow-md pl-3 flex flex-col justify-center text-[10px] text-[#444]">
        <Rate value="0" />
        <Rate value="6" down />
      </div>
      <div className="relative w-[56px] h-[56px] rounded-full bg-white shadow-md flex items-baseline justify-center pt-[12px] text-black">
        <svg viewBox="0 0 56 56" className="absolute inset-0" fill="none"><path d="M34 4A25 25 0 1 0 28 53" stroke="#ee8a4c" strokeWidth="2" /></svg>
        <span className="text-[24px] leading-[28px]">53</span><span className="text-[10px]">%</span>
      </div>
    </div>
  );
}

function Watermark() {
  return (
    <svg width="300" height="150" viewBox="1220 680 300 150" className="pointer-events-none absolute right-[80px] bottom-[27px]" fill="#f6f9fc" fillOpacity=".82" stroke="#8a94a8" strokeOpacity=".45">
      <ellipse cx="1337" cy="721" rx="10" ry="13" /><ellipse cx="1357" cy="701" rx="10" ry="14" />
      <ellipse cx="1382" cy="703" rx="10" ry="13" /><ellipse cx="1398" cy="727" rx="10" ry="13" />
      <path d="M1367 723c10 0 14 10 21 17 8 8 15 14 15 22 0 9-7 15-17 14-8-1-12-3-19-3s-11 2-18 3c-10 1-17-5-17-14 0-9 8-14 15-22 7-7 10-17 20-17z" />
      <g fontFamily="Liberation Sans, sans-serif" fontWeight="700">
        <text x="1226" y="775" fontSize="64">Bai</text>
        <text x="1344" y="766" fontSize="38" fill="#a8b4c8" stroke="none">du</text>
      </g>
      <text x="1412" y="772" fontSize="48" fontWeight="900" fontFamily="Noto Sans CJK SC, sans-serif">经验</text>
      <text x="1229" y="812" fontSize="32" fontFamily="Noto Sans, sans-serif" fill="#fff" strokeWidth="2" strokeOpacity=".35" paintOrder="stroke" fontWeight="500">jingyan.baidu.com</text>
    </svg>
  );
}

export default function App() {
  return (
    <div className="relative h-screen flex flex-col overflow-hidden text-[#1c1c1c] bg-linear-to-r from-[#fdfdfd] to-[#ededed] font-['Noto_Sans','Noto_Sans_CJK_SC',sans-serif]">
      <TitleBar />
      <MenuBar />
      <Toolbars />
      <main className="flex-1 min-h-0 flex">
        <Sidebar />
        <section className="flex-1 min-w-0 flex flex-col">
          <ContextBar />
          <div className="flex-1 min-h-0 flex">
            <Toolbox />
            <Viewport />
          </div>
          <PromptBar />
        </section>
      </main>
      <MessageArea />
      <SpeedBall />
      <Watermark />
    </div>
  );
}
